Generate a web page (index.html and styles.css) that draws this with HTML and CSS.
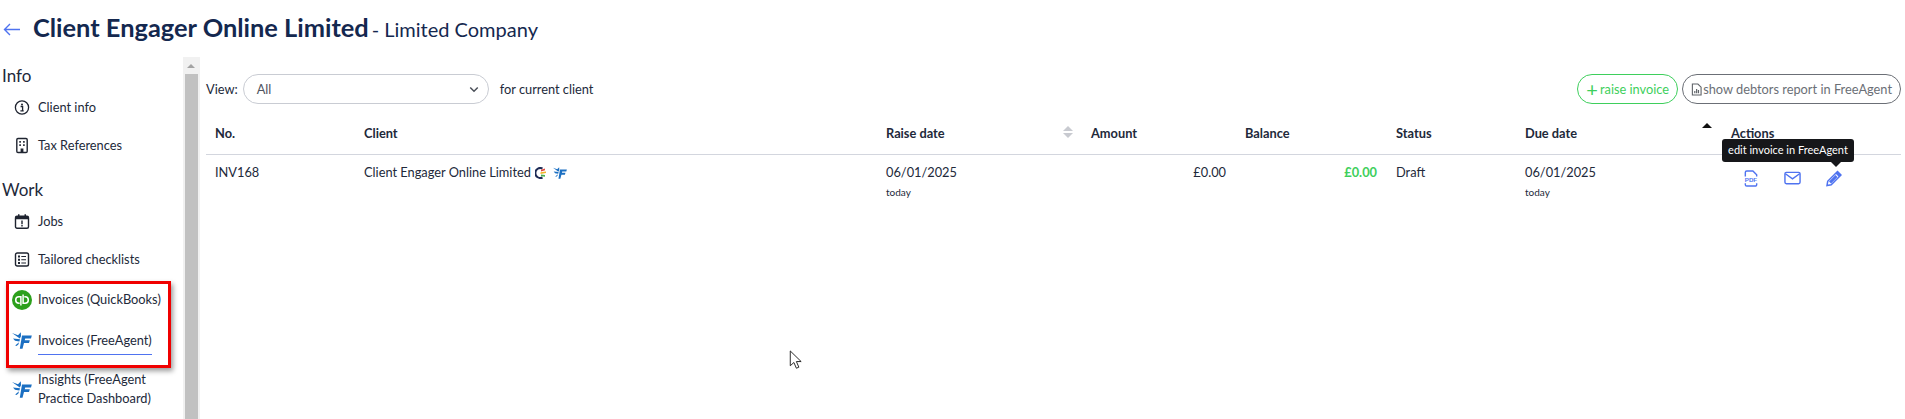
FILE: index.html
```html
<!DOCTYPE html>
<html lang="en">
<head>
    <meta charset="UTF-8">
    <title>Invoices (FreeAgent)</title>
    <link rel="stylesheet" href="styles.css">
</head>
<body>
    <svg class="icon-defs" width="0" height="0">
        <symbol id="fa-logo" viewBox="0 0 20 17">
            <path d="M0 1 L6 3.200 L8.800 0.300 L9 4.200 L7.800 6.600 Z M1 6.400 L8 7.200 L7.400 9.600 L3 8.800 Z M3.200 13.500 L7 10.200 L6.400 12.600 L4.500 14 Z" fill="#1b6fc2"/>
            <path d="M10 3.500 H19.800 L19 6.400 H13.200 L12.700 8.300 H17.800 L17 11 H12 L10.500 16.800 H7.800 Z" fill="#1b6fc2"/>
        </symbol>
    </svg>

    <div class="page-title">
        <svg class="back-arrow" viewBox="0 0 18 14"><path d="M17 7H1.500M7 1.500 1.500 7 7 12.500" fill="none" stroke="#4f73f0" stroke-width="1.400"/></svg>
        <h1>Client Engager Online Limited</h1>
        <span class="company-type">- Limited Company</span>
    </div>

    <div class="layout">
        <nav class="sidebar">
            <h2 class="nav-heading">Info</h2>
            <a class="nav-item">
                <svg class="nav-icon" viewBox="0 0 16 16"><circle cx="8" cy="8" r="6.600" fill="none" stroke="#1f2430" stroke-width="1.300"/><circle cx="8" cy="4.900" r="1" fill="#1f2430"/><path d="M6.600 7h2v4.200M6.400 11.400h3.300" fill="none" stroke="#1f2430" stroke-width="1.300"/></svg>
                <span>Client info</span>
            </a>
            <a class="nav-item">
                <svg class="nav-icon" viewBox="0 0 16 16"><rect x="2.800" y="1" width="10.400" height="14" rx="1.200" fill="none" stroke="#1f2430" stroke-width="1.400"/><path d="M5.300 3.600h1.600v1.600H5.300zM9.100 3.600h1.600v1.600H9.100zM5.300 6.800h1.600v1.600H5.300zM9.100 6.800h1.600v1.600H9.100zM6.600 11h2.800v4H6.600z" fill="#1f2430"/></svg>
                <span>Tax References</span>
            </a>

            <h2 class="nav-heading nav-heading-work">Work</h2>
            <a class="nav-item">
                <svg class="nav-icon" viewBox="0 0 16 16"><rect x="1.500" y="2.700" width="13" height="12" rx="1.500" fill="none" stroke="#1f2430" stroke-width="1.400"/><path d="M1.500 3.200h13v2.600h-13zM4 .8h1.500v3H4zM10.500 .8H12v3h-1.500zM7.300 7h1.400v3.800H7.300zM7.300 11.600h1.400V13H7.300z" fill="#1f2430"/></svg>
                <span>Jobs</span>
            </a>
            <a class="nav-item">
                <svg class="nav-icon" viewBox="0 0 16 16"><rect x="1.500" y="1.500" width="13" height="13" rx="1.800" fill="none" stroke="#1f2430" stroke-width="1.400"/><path d="M4 4h2v2H4zM4 7.200h2v2H4zM4 10.400h2v2H4zM7.300 4.500H12v1H7.300zM7.300 7.700H12v1H7.300zM7.300 10.900H12v1H7.300z" fill="#1f2430"/></svg>
                <span>Tailored checklists</span>
            </a>
            <a class="nav-item nav-item-logo">
                <svg class="nav-logo" viewBox="0 0 20 20"><circle cx="10" cy="10" r="10" fill="#2ca01c"/><path d="M8.900 15.500V6.800H6.900a3.200 3.200 0 0 0 0 6.400H7.700M11.100 4.500V13.200h2a3.200 3.200 0 0 0 0-6.400H12.300" fill="none" stroke="#fff" stroke-width="1.500"/></svg>
                <span>Invoices (QuickBooks)</span>
            </a>
            <a class="nav-item nav-item-logo">
                <svg class="nav-logo nav-logo-fa"><use href="#fa-logo"/></svg>
                <span class="nav-active">Invoices (FreeAgent)</span>
            </a>
            <a class="nav-item nav-item-logo nav-item-wrap">
                <svg class="nav-logo nav-logo-fa"><use href="#fa-logo"/></svg>
                <span>Insights (FreeAgent Practice Dashboard)</span>
            </a>
            <div class="highlight-box"></div>
        </nav>

        <div class="side-scroll"><div class="side-scroll-btn"></div><div class="side-scroll-thumb"></div></div>

        <main class="content">
            <div class="toolbar">
                <label class="view-label">View:</label>
                <div class="view-select">
                    <span>All</span>
                    <svg class="select-chevron" viewBox="0 0 12 8"><path d="M1.500 1.500 6 6l4.500-4.500" fill="none" stroke="#4a4f58" stroke-width="1.800"/></svg>
                </div>
                <span class="view-suffix">for current client</span>
                <div class="toolbar-actions">
                    <a class="pill pill-green"><span class="pill-plus">+</span>raise invoice</a>
                    <a class="pill pill-grey">
                        <svg class="pill-icon" viewBox="0 0 12 14"><path d="M1.500 1h6L11 4.500V13H1.500z" fill="none" stroke="#5f6368" stroke-width="1.200"/><path d="M3.500 11V8.500h1.300V11zM5.500 11V6.500h1.300V11zM7.500 11V7.500h1.300V11z" fill="#5f6368"/></svg>show debtors report in FreeAgent
                    </a>
                </div>
            </div>

            <table class="invoice-table">
                <colgroup>
                    <col class="col-no"><col class="col-client"><col class="col-raise"><col class="col-amount"><col class="col-balance"><col class="col-status"><col class="col-due"><col class="col-actions">
                </colgroup>
                <thead>
                    <tr>
                        <th>No.</th>
                        <th>Client</th>
                        <th class="sortable">Raise date<span class="sort-arrows"><i class="arrow-up"></i><i class="arrow-down"></i></span></th>
                        <th>Amount</th>
                        <th>Balance</th>
                        <th>Status</th>
                        <th class="sortable">Due date<span class="sort-arrows sort-active"><i class="arrow-up"></i></span></th>
                        <th>Actions</th>
                    </tr>
                </thead>
                <tbody>
                    <tr>
                        <td>INV168</td>
                        <td>
                            Client Engager Online Limited
                            <svg class="client-logo" viewBox="0 0 12 12"><path d="M7.500 1.500A5 5 0 1 0 7.500 10.500" fill="none" stroke="#1d2a55" stroke-width="2"/><path d="M6 2.800l4-1.300v1.700l-4 1.200z" fill="#e0483e"/><path d="M5.500 5.200l5.500-.8v1.700l-5.500.8z" fill="#f0b429"/><path d="M6 7.600l4 .4v1.700l-4-.4z" fill="#4caf50"/></svg>
                            <svg class="client-logo-fa"><use href="#fa-logo"/></svg>
                        </td>
                        <td>06/01/2025<small>today</small></td>
                        <td class="money">£0.00</td>
                        <td class="money money-green">£0.00</td>
                        <td>Draft</td>
                        <td>06/01/2025<small>today</small></td>
                        <td class="actions-cell">
                            <div class="action-icons">
                                <svg class="action-icon" viewBox="0 0 16 18"><path d="M2 7V2.500A1.500 1.500 0 0 1 3.500 1H10l4 4v2M2 14v1.500A1.500 1.500 0 0 0 3.500 17h9a1.500 1.500 0 0 0 1.500-1.500V14" fill="none" stroke="#4f73f0" stroke-width="1.500"/><text x="8" y="12.500" class="pdf-label">PDF</text></svg>
                                <svg class="action-icon action-mail" viewBox="0 0 18 14"><rect x="1" y="1" width="16" height="12" rx="1.500" fill="none" stroke="#4f73f0" stroke-width="1.500"/><path d="M1.500 2.500 9 8l7.500-5.500" fill="none" stroke="#4f73f0" stroke-width="1.500"/></svg>
                                <svg class="action-icon" viewBox="0 0 16 16"><path d="M11.500 1 15 4.500 5.200 14.300 1 15l.7-4.200z" fill="none" stroke="#4f73f0" stroke-width="1.500"/><path d="M11.500 1 15 4.500l-2 2L9.500 3zM3 11l6.500-6.500 2 2L5 13z" fill="#4f73f0"/></svg>
                            </div>
                            <div class="tooltip">edit invoice in FreeAgent</div>
                        </td>
                    </tr>
                </tbody>
            </table>
        </main>
    </div>

    <svg class="mouse-cursor" viewBox="0 0 14 22"><path d="M1 1v15.500l3.800-3.400 2.600 6 2.600-1.100-2.600-5.900h5z" fill="#fff" stroke="#222" stroke-width="1"/></svg>
</body>
</html>
```

FILE: styles.css
```css
:root {
    --navy: #14284f;
    --text: #22293a;
    --blue: #4f73f0;
    --green: #3ecf5c;
    --line: #d3d6de;
}

html, body {
    height: 419px;
    overflow: hidden;
}

body {
    margin: 0;
    font-family: Lato, "Open Sans", Arial, sans-serif;
    font-size: 12.8px;
    color: var(--text);
    background: #fff;
}

.icon-defs {
    position: absolute;
}

.page-title {
    display: flex;
    align-items: baseline;
    height: 57px;
    box-sizing: border-box;
    padding: 12px 0 0 3px;
}

.back-arrow {
    width: 18px;
    height: 15px;
    margin-right: 12px;
}

.page-title h1 {
    margin: 0;
    font-size: 25.4px;
    font-weight: 700;
    color: var(--navy);
}

.company-type {
    margin-left: 3px;
    font-size: 20px;
    color: var(--navy);
}

.layout {
    display: flex;
    height: 362px;
}

.sidebar {
    position: relative;
    width: 183px;
    flex-shrink: 0;
    padding-left: 2px;
    box-sizing: border-box;
}

.nav-heading {
    margin: 8px 0 1px;
    font-size: 17px;
    font-weight: 400;
    line-height: 22px;
    color: var(--text);
}

.nav-heading-work {
    margin-top: 14px;
}

.nav-item {
    display: flex;
    align-items: center;
    height: 38.5px;
    padding-left: 12px;
    line-height: 19px;
}

.nav-icon {
    width: 16px;
    height: 17px;
    margin-right: 8px;
    flex-shrink: 0;
}

.nav-item-logo {
    height: 41px;
    padding-left: 10px;
}

.nav-logo {
    width: 20px;
    height: 20px;
    margin-right: 6px;
    flex-shrink: 0;
}

.nav-logo-fa {
    height: 17px;
}

.nav-item-wrap {
    height: 56px;
}

.nav-item-wrap span {
    width: 120px;
}

.nav-active {
    padding-bottom: 4px;
    margin-top: 4px;
    border-bottom: 1px solid var(--blue);
}

.highlight-box {
    position: absolute;
    left: 6px;
    top: 224px;
    width: 159px;
    height: 81px;
    border: 3px solid #f00000;
    box-shadow: 2px 3px 5px rgba(0, 0, 0, 0.4);
}

.side-scroll {
    width: 17px;
    flex-shrink: 0;
    background: #f1f1f1;
    padding: 0 2px;
    box-sizing: border-box;
}

.side-scroll-btn {
    height: 17px;
    position: relative;
}

.side-scroll-btn::after {
    content: "";
    position: absolute;
    left: 2px;
    top: 7px;
    border: 4px solid transparent;
    border-top: 0;
    border-bottom: 4px solid #a3a3a3;
}

.side-scroll-thumb {
    height: 345px;
    background: #c1c1c1;
}

.content {
    flex: 1;
    min-width: 0;
    padding: 0 4px 0 6px;
}

.toolbar {
    display: flex;
    align-items: center;
    height: 30px;
    margin-top: 17px;
}

.view-label {
    margin-right: 5px;
}

.view-select {
    display: flex;
    align-items: center;
    justify-content: space-between;
    box-sizing: border-box;
    width: 246px;
    height: 30px;
    padding: 0 9px 0 13px;
    border: 1px solid #c9ccd3;
    border-radius: 15px;
    color: #50555f;
}

.select-chevron {
    width: 10px;
    height: 7px;
}

.view-suffix {
    margin-left: 11px;
}

.toolbar-actions {
    display: flex;
    gap: 4px;
    margin-left: auto;
}

.pill {
    display: flex;
    align-items: center;
    box-sizing: border-box;
    height: 30px;
    padding: 0 8px;
    border: 1px solid;
    border-radius: 15px;
}

.pill-green {
    border-color: var(--green);
    color: var(--green);
}

.pill-plus {
    font-size: 20px;
    line-height: 20px;
    margin-right: 2px;
}

.pill-grey {
    border-color: #6b6f76;
    color: #6b6f76;
}

.pill-icon {
    width: 11px;
    height: 13px;
    margin-right: 1px;
}

.invoice-table {
    width: 1695px;
    margin-top: 6px;
    border-collapse: collapse;
    table-layout: fixed;
}

.col-no { width: 149px; }
.col-client { width: 522px; }
.col-raise { width: 205px; }
.col-amount { width: 154px; }
.col-balance { width: 151px; }
.col-status { width: 129px; }
.col-due { width: 206px; }

.invoice-table th {
    position: relative;
    height: 44px;
    box-sizing: border-box;
    padding: 3px 0 0 9px;
    text-align: left;
    font-weight: 700;
    border-bottom: 1px solid var(--line);
}

.invoice-table td {
    position: relative;
    padding: 8px 0 0 9px;
    height: 44px;
    vertical-align: top;
    line-height: 19px;
}

.invoice-table small {
    display: block;
    margin-top: 1px;
    font-size: 10px;
}

.invoice-table .money {
    padding-right: 10px;
    text-align: right;
}

.invoice-table .money-green {
    color: var(--green);
    font-weight: 700;
}

.sort-arrows {
    position: absolute;
    right: 9px;
    top: 16px;
    display: flex;
    flex-direction: column;
    gap: 2px;
}

.sort-arrows i {
    display: block;
    border: 5px solid transparent;
}

.arrow-up {
    border-top: 0 !important;
    border-bottom-color: #c8cad0 !important;
}

.arrow-down {
    border-bottom: 0 !important;
    border-top-color: #c8cad0 !important;
}

.sort-active .arrow-up {
    border-bottom-color: #111 !important;
}

.sort-active {
    top: 13px;
    right: 10px;
}

.client-logo {
    width: 12px;
    height: 12px;
    margin-left: 1px;
    vertical-align: -2px;
}

.client-logo-fa {
    width: 14px;
    height: 12px;
    margin-left: 3px;
    vertical-align: -2px;
}

.action-icons {
    display: flex;
    align-items: center;
    gap: 25px;
    padding: 7px 0 0 12px;
}

.action-icon {
    width: 16px;
    height: 17px;
    flex-shrink: 0;
}

.action-mail {
    width: 17px;
    height: 14px;
}

.pdf-label {
    font-family: "Liberation Sans", sans-serif;
    font-size: 6.5px;
    font-weight: 700;
    text-anchor: middle;
    fill: #4f73f0;
}

.tooltip {
    position: absolute;
    left: 0;
    top: -16px;
    box-sizing: border-box;
    width: 132px;
    height: 23px;
    padding-top: 3px;
    background: #16171a;
    border-radius: 3px;
    color: #fff;
    font-size: 11px;
    line-height: 16px;
    text-align: center;
    white-space: nowrap;
}

.tooltip::after {
    content: "";
    position: absolute;
    left: 109px;
    top: 23px;
    border: 5px solid transparent;
    border-bottom: 0;
    border-top-color: #16171a;
}

.mouse-cursor {
    position: absolute;
    left: 789px;
    top: 350px;
    width: 14px;
    height: 21px;
}
```
